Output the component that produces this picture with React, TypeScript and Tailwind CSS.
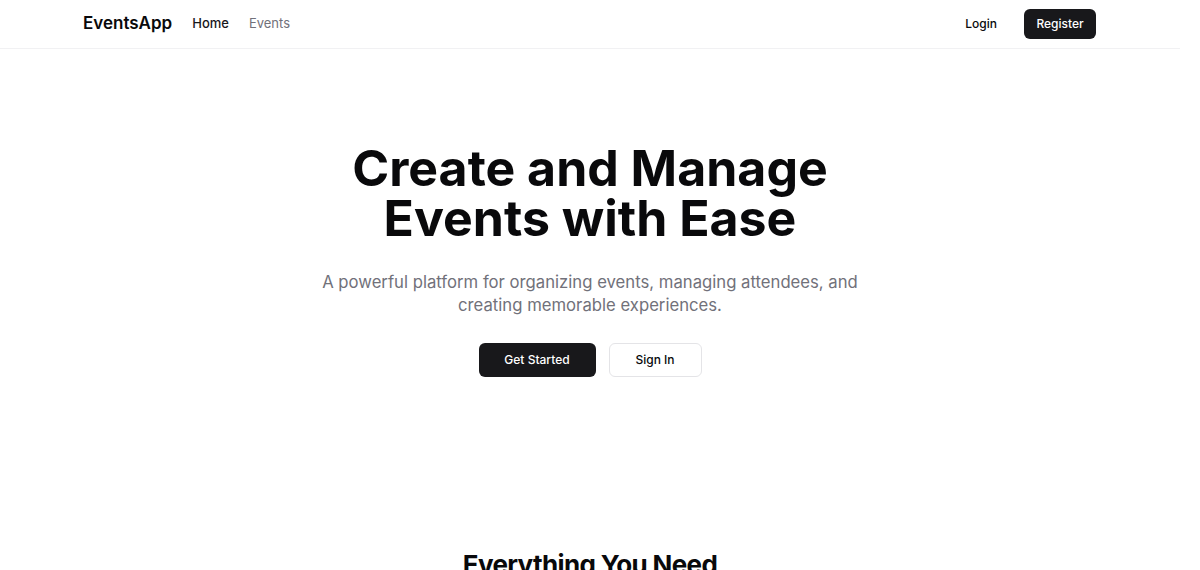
export default function App() {
  return (
    <div
      className="min-h-screen w-[1180px] bg-white text-[#09090b]"
      style={{ fontFamily: "Inter, 'Noto Sans', sans-serif" }}
    >
      <header className="border-b border-[#f1f1f3]">
        <div className="flex h-12 items-center pl-[83px] pr-[84px]">
          <div className="flex items-center gap-5">
            <span className="text-[17px] font-semibold">EventsApp</span>
            <nav className="flex items-center gap-5 text-[13px]">
              <a className="font-medium text-[#18181b]">Home</a>
              <a className="text-[#71717a]">Events</a>
            </nav>
          </div>
          <div className="ml-auto flex items-center gap-[27px]">
            <button className="text-[12px] font-medium">Login</button>
            <button className="h-[30px] w-[72px] rounded-md bg-[#18181b] text-[12px] font-medium text-white">
              Register
            </button>
          </div>
        </div>
      </header>

      <main>
        <section className="flex flex-col items-center pt-[94px] text-center">
          <h1 className="text-[50px] font-bold leading-[50px]">
            Create and Manage
            <br />
            Events with Ease
          </h1>
          <p className="mt-[28px] max-w-[560px] text-[16.7px] leading-[23px] text-[#71717a]">
            A powerful platform for organizing events, managing attendees, and creating memorable experiences.
          </p>
          <div className="mt-[26px] flex items-center gap-[13px]">
            <button className="h-[34px] w-[117px] rounded-md bg-[#18181b] text-[12px] font-medium text-white">
              Get Started
            </button>
            <button className="h-[34px] w-[93px] rounded-md border border-[#e4e4e7] bg-white text-[12px] font-medium">
              Sign In
            </button>
          </div>
        </section>

        <section className="pt-[168px] text-center">
          <h2 className="text-[26px] font-bold tracking-tight">Everything You Need</h2>
        </section>
      </main>
    </div>
  );
}
